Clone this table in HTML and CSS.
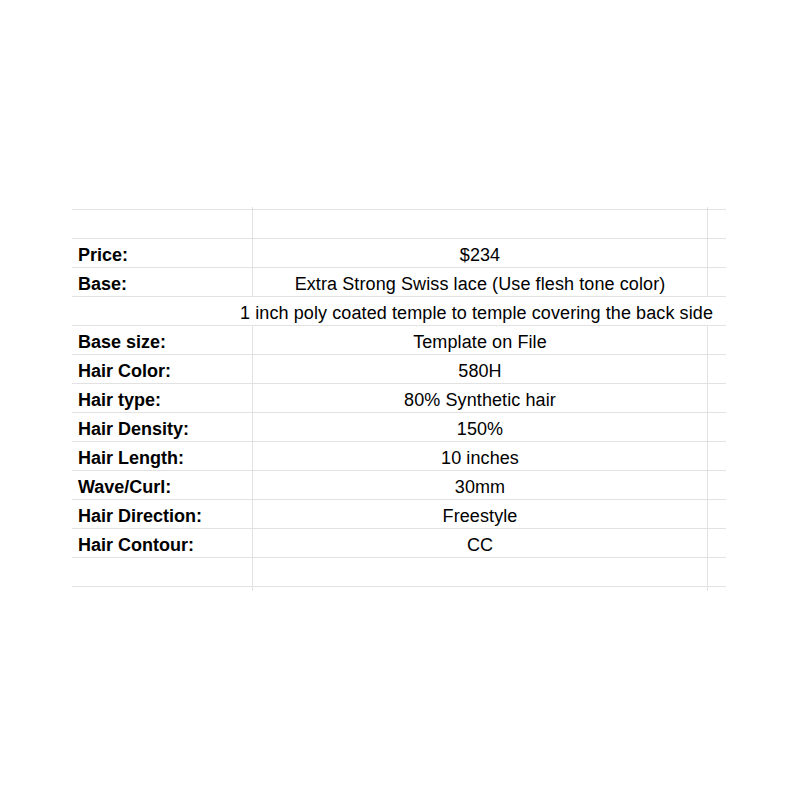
FILE: index.html
```html
<!DOCTYPE html>
<html>
<head>
<meta charset="utf-8">
<link rel="stylesheet" href="styles.css">
</head>
<body>
<div class="sheet">
  <div class="row spacer-top"><div class="c c1"></div><div class="c c2"></div><div class="c c3"></div></div>
  <div class="row"><div class="c c1"></div><div class="c c2"></div><div class="c c3"></div></div>
  <div class="row"><div class="c c1 label">Price:</div><div class="c c2 val">$234</div><div class="c c3"></div></div>
  <div class="row"><div class="c c1 label">Base:</div><div class="c c2 val">Extra Strong Swiss lace (Use flesh tone color)</div><div class="c c3"></div></div>
  <div class="row"><div class="c c1 nob"></div><div class="c c2 val nob overflow">1 inch poly coated temple to temple covering the back side</div><div class="c c3"></div></div>
  <div class="row"><div class="c c1 label">Base size:</div><div class="c c2 val">Template on File</div><div class="c c3"></div></div>
  <div class="row"><div class="c c1 label">Hair Color:</div><div class="c c2 val">580H</div><div class="c c3"></div></div>
  <div class="row"><div class="c c1 label">Hair type:</div><div class="c c2 val">80% Synthetic hair</div><div class="c c3"></div></div>
  <div class="row"><div class="c c1 label">Hair Density:</div><div class="c c2 val">150%</div><div class="c c3"></div></div>
  <div class="row"><div class="c c1 label">Hair Length:</div><div class="c c2 val">10 inches</div><div class="c c3"></div></div>
  <div class="row"><div class="c c1 label">Wave/Curl:</div><div class="c c2 val">30mm</div><div class="c c3"></div></div>
  <div class="row"><div class="c c1 label">Hair Direction:</div><div class="c c2 val">Freestyle</div><div class="c c3"></div></div>
  <div class="row"><div class="c c1 label">Hair Contour:</div><div class="c c2 val">CC</div><div class="c c3"></div></div>
  <div class="row"><div class="c c1"></div><div class="c c2"></div><div class="c c3"></div></div>
  <div class="row spacer-bottom"><div class="c c1"></div><div class="c c2"></div><div class="c c3"></div></div>
</div>
</body>
</html>
```
FILE: styles.css
```css
html, body {
  margin: 0;
  padding: 0;
  background: #ffffff;
}
body {
  font-family: "Liberation Sans", Arial, sans-serif;
  color: #000000;
}
.sheet {
  margin: 207px 0 0 72px;
  width: 654px;
}
.row {
  display: grid;
  grid-template-columns: 181px 455px 18px;
  height: 29px;
  box-sizing: border-box;
  border-top: 1px solid #e2e2e2;
}
.row.spacer-top {
  height: 2px;
  border-top: none;
}
.row.spacer-bottom {
  height: 5px;
}
.c {
  box-sizing: border-box;
  height: 100%;
  font-size: 18px;
  line-height: 24px;
  padding-top: 4px;
  white-space: nowrap;
}
.c1, .c2 {
  border-right: 1px solid #e2e2e2;
}
.c1.nob, .c2.nob {
  border-right-color: transparent;
}
.label {
  font-weight: bold;
  padding-left: 6px;
}
.val {
  display: flex;
  justify-content: center;
  position: relative;
  z-index: 1;
  letter-spacing: 0.1px;
}
.val.overflow {
  padding-right: 7px;
}
```
